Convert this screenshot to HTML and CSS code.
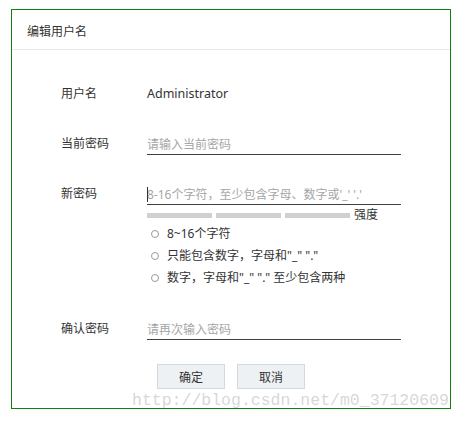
FILE: index.html
```html
<!DOCTYPE html>
<html lang="zh-CN">
<head>
<meta charset="utf-8">
<title>编辑用户名</title>
<link rel="stylesheet" href="styles.css">
</head>
<body>
<div class="dialog">
  <div class="dialog-header">编辑用户名</div>
  <div class="dialog-body">
    <div class="row">
      <div class="label">用户名</div>
      <div class="value">Administrator</div>
    </div>
    <div class="row">
      <div class="label">当前密码</div>
      <input class="field" type="password" placeholder="请输入当前密码">
    </div>
    <div class="row row-new">
      <div class="label">新密码</div>
      <div class="group">
        <div class="field-wrap">
          <input class="field" type="password" placeholder="8-16个字符，至少包含字母、数字或'_' '.'">
          <span class="caret"></span>
        </div>
        <div class="strength">
          <span class="bar"></span>
          <span class="bar"></span>
          <span class="bar"></span>
          <span class="strength-text">强度</span>
        </div>
        <ul class="rules">
          <li><span class="dot"></span>8~16个字符</li>
          <li><span class="dot"></span>只能包含数字，字母和"_" "."</li>
          <li><span class="dot"></span>数字，字母和"_" "." 至少包含两种</li>
        </ul>
      </div>
    </div>
    <div class="row row-confirm">
      <div class="label">确认密码</div>
      <input class="field" type="password" placeholder="请再次输入密码">
    </div>
    <div class="actions">
      <button class="btn" type="button">确定</button>
      <button class="btn" type="button">取消</button>
    </div>
  </div>
</div>
<div class="watermark">http://blog.csdn.net/m0_37120609</div>
</body>
</html>
```
FILE: styles.css
```css
* { box-sizing: border-box; }
html, body { margin: 0; padding: 0; background: #fff; }
body {
  font-family: "Noto Sans", "Noto Sans CJK SC", sans-serif;
  font-size: 12px;
  color: #333;
  position: relative;
  width: 464px;
  height: 425px;
  overflow: hidden;
  padding: 9px 0 0 11px;
}
.dialog {
  width: 440px;
  height: 400px;
  border: 1px solid #118011;
  background: #fff;
}
.dialog-header {
  height: 40px;
  padding: 12px 0 0 15px;
  line-height: 20px;
  border-bottom: 1px solid #e8e8e8;
}
.dialog-body {
  padding: 34px 0 0 49px;
}
.row {
  display: flex;
  align-items: flex-start;
  margin-bottom: 29px;
}
.label {
  width: 86px;
  flex: none;
  line-height: 20px;
}
.value {
  line-height: 20px;
  height: 21px;
  font-size: 12.5px;
}
.field {
  display: block;
  width: 254px;
  height: 21px;
  padding: 0;
  margin: 0;
  border: none;
  border-bottom: 1px solid #404040;
  font-family: "Noto Sans", "Noto Sans CJK SC", sans-serif;
  font-size: 12px;
  line-height: 20px;
  color: #333;
  background: transparent;
  outline: none;
}
.field::placeholder { color: #a6a6a6; opacity: 1; }
.field-wrap { position: relative; }
.caret {
  position: absolute;
  left: 0;
  top: 3px;
  width: 1px;
  height: 15px;
  background: #333;
}
.group { display: flex; flex-direction: column; }
.strength {
  display: flex;
  align-items: center;
  gap: 4px;
  margin-top: 2px;
  height: 16px;
}
.bar {
  width: 65px;
  height: 5px;
  background: #d0d0d0;
}
.strength-text { line-height: 16px; }
.rules {
  list-style: none;
  margin: 0;
  padding: 0 0 0 4px;
}
.rules li {
  display: flex;
  align-items: center;
  gap: 8px;
  line-height: 22px;
}
.dot {
  width: 8px;
  height: 8px;
  border: 1px solid #9a9a9a;
  border-radius: 50%;
  flex: none;
}
.row-new { margin-bottom: 30px; }
.row-confirm { margin-bottom: 24px; }
.actions {
  display: flex;
  gap: 12px;
  padding-left: 96px;
}
.btn {
  width: 68px;
  height: 25px;
  padding: 0;
  border: 1px solid #d6d9dc;
  background: #eef1f4;
  font-family: "Noto Sans", "Noto Sans CJK SC", sans-serif;
  font-size: 12px;
  color: #333;
}
.watermark {
  position: absolute;
  left: 132px;
  top: 393px;
  font-family: "Liberation Mono", monospace;
  font-size: 16.5px;
  line-height: 16.5px;
  color: rgba(175, 175, 175, 0.5);
  white-space: nowrap;
}
```
